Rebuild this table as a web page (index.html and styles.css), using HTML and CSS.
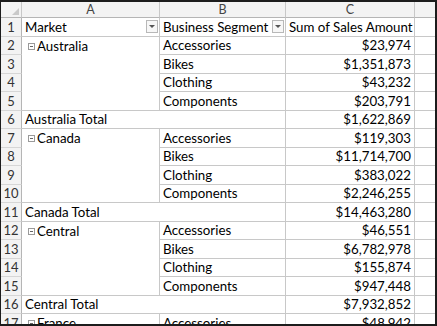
FILE: index.html
```html
<!DOCTYPE html>
<html>
<head>
<meta charset="utf-8">
<link rel="stylesheet" href="styles.css">
</head>
<body>
<div class="frame">
  <div class="sheet">
    <div class="corner"><span class="tri"></span></div>
    <div class="colhead">A</div>
    <div class="colhead">B</div>
    <div class="colhead">C</div>
    <div class="colhead last"></div>

    <div class="rn">1</div>
    <div class="c hdr">Market<span class="dd"><span class="arrow"></span></span></div>
    <div class="c hdr">Business Segment<span class="dd"><span class="arrow"></span></span></div>
    <div class="c hdr">Sum of Sales Amount</div>
    <div class="c blank"></div>

    <div class="rn">2</div>
    <div class="c grp"><span class="tog"></span>Australia</div>
    <div class="c">Accessories</div>
    <div class="c num">$23,974</div>
    <div class="c blank"></div>
    <div class="rn">3</div>
    <div class="c">Bikes</div>
    <div class="c num">$1,351,873</div>
    <div class="c blank"></div>
    <div class="rn">4</div>
    <div class="c">Clothing</div>
    <div class="c num">$43,232</div>
    <div class="c blank"></div>
    <div class="rn">5</div>
    <div class="c">Components</div>
    <div class="c num">$203,791</div>
    <div class="c blank"></div>
    <div class="rn">6</div>
    <div class="c total">Australia Total</div>
    <div class="c num totnum">$1,622,869</div>
    <div class="c blank"></div>

    <div class="rn">7</div>
    <div class="c grp"><span class="tog"></span>Canada</div>
    <div class="c">Accessories</div>
    <div class="c num">$119,303</div>
    <div class="c blank"></div>
    <div class="rn">8</div>
    <div class="c">Bikes</div>
    <div class="c num">$11,714,700</div>
    <div class="c blank"></div>
    <div class="rn">9</div>
    <div class="c">Clothing</div>
    <div class="c num">$383,022</div>
    <div class="c blank"></div>
    <div class="rn">10</div>
    <div class="c">Components</div>
    <div class="c num">$2,246,255</div>
    <div class="c blank"></div>
    <div class="rn">11</div>
    <div class="c total">Canada Total</div>
    <div class="c num totnum">$14,463,280</div>
    <div class="c blank"></div>

    <div class="rn">12</div>
    <div class="c grp"><span class="tog"></span>Central</div>
    <div class="c">Accessories</div>
    <div class="c num">$46,551</div>
    <div class="c blank"></div>
    <div class="rn">13</div>
    <div class="c">Bikes</div>
    <div class="c num">$6,782,978</div>
    <div class="c blank"></div>
    <div class="rn">14</div>
    <div class="c">Clothing</div>
    <div class="c num">$155,874</div>
    <div class="c blank"></div>
    <div class="rn">15</div>
    <div class="c">Components</div>
    <div class="c num">$947,448</div>
    <div class="c blank"></div>
    <div class="rn">16</div>
    <div class="c total">Central Total</div>
    <div class="c num totnum">$7,932,852</div>
    <div class="c blank"></div>

    <div class="rn">17</div>
    <div class="c grp"><span class="tog"></span>France</div>
    <div class="c">Accessories</div>
    <div class="c num">$48,942</div>
    <div class="c blank"></div>
  </div>
</div>
</body>
</html>
```

FILE: styles.css
```css
html, body {
  margin: 0;
  padding: 0;
  background: #ffffff;
}

.frame {
  width: 437px;
  height: 326px;
  box-sizing: border-box;
  border-top: 2px solid #1c1c1c;
  border-left: 1px solid #1c1c1c;
  border-right: 2px solid #1c1c1c;
  border-bottom: 2px solid #1c1c1c;
  overflow: hidden;
  background: #ffffff;
}

.sheet {
  display: grid;
  grid-template-columns: 21px 138px 126px 129px 1fr;
  grid-template-rows: 16px repeat(17, 18.5px);
  font-family: Lato, "Liberation Sans", sans-serif;
  font-size: 13.3px;
  color: #000;
}

.sheet > div {
  box-sizing: border-box;
  border-right: 1px solid #c8c8c8;
  border-bottom: 1px solid #c8c8c8;
  display: flex;
  align-items: center;
  white-space: nowrap;
  overflow: hidden;
}

.corner {
  background: #f3f3f3;
  position: relative;
  border-bottom-color: #b5b5b5 !important;
}

.tri {
  position: absolute;
  right: 2px;
  bottom: 2px;
  width: 0;
  height: 0;
  border-left: 7px solid transparent;
  border-bottom: 7px solid #c9c9c9;
}

.colhead {
  background: #f3f3f3;
  justify-content: center;
  color: #444;
  font-size: 12.5px;
  border-bottom-color: #b5b5b5 !important;
}

.colhead.last {
  border-right: none !important;
}

.rn {
  background: #f3f3f3;
  justify-content: center;
  color: #333;
  font-size: 13px;
  border-right-color: #b5b5b5 !important;
  border-bottom-color: #d6d6d6 !important;
}

.c {
  padding: 0 3px;
}

.hdr {
  justify-content: flex-start;
  position: relative;
}

.dd {
  position: absolute;
  right: 1px;
  top: 2px;
  width: 12px;
  height: 13px;
  box-sizing: border-box;
  border: 1px solid #b8b8b8;
  background: #f7f7f7;
  display: flex;
  align-items: center;
  justify-content: center;
}

.arrow {
  width: 0;
  height: 0;
  border-left: 3px solid transparent;
  border-right: 3px solid transparent;
  border-top: 3px solid #555;
}

.grp {
  grid-row: span 4;
  align-items: flex-start !important;
  padding-top: 1px;
  padding-left: 6px;
}

.tog {
  display: inline-block;
  width: 7px;
  height: 7px;
  box-sizing: border-box;
  border: 1px solid #9a9a9a;
  margin: 5px 2px 0 0;
  position: relative;
  flex: none;
}

.tog::after {
  content: "";
  position: absolute;
  left: 1px;
  right: 1px;
  top: 2px;
  height: 1px;
  background: #666;
}

.total {
  grid-column: span 2;
}

.num {
  justify-content: flex-end;
}

.blank {
  border-right: none !important;
}
```
